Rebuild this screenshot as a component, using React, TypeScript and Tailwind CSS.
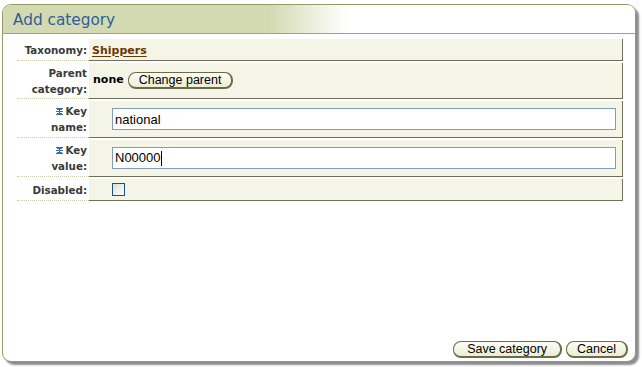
import React from "react";

const Req = () => (
  <svg width="7" height="7" viewBox="0 0 7 7" className="inline-block mr-[3px] align-[0px]">
    <rect x="0" y="0" width="7" height="1" fill="#3b6ea5" />
    <rect x="1" y="1" width="5" height="1" fill="#3b6ea5" />
    <rect x="0" y="3" width="7" height="1" fill="#3b6ea5" />
    <rect x="1" y="5" width="5" height="1" fill="#3b6ea5" />
    <rect x="0" y="6" width="7" height="1" fill="#3b6ea5" />
    <rect x="3" y="1" width="1" height="5" fill="#3b6ea5" />
  </svg>
);

const Btn = ({ children, px = "px-[10px]" }: { children: React.ReactNode; px?: string }) => (
  <button
    type="button"
    className={`h-[17px] ${px} rounded-[8px] border border-[#6b6b48] border-r-2 border-b-2 bg-[linear-gradient(to_bottom,#fdfdf4,#ecedd6)] text-[12.5px] leading-[13px] text-black font-['Liberation_Sans',Arial,sans-serif]`}
  >
    {children}
  </button>
);

const Row = ({
  label,
  h,
  children,
}: {
  label: React.ReactNode;
  h: string;
  children: React.ReactNode;
}) => (
  <div className={`flex ${h}`}>
    <div className="w-[72px] flex items-center justify-end pr-[2px] text-right border-b border-dotted border-[#c9cca6] text-[10.3px] leading-[16px] font-bold text-[#3a3a3a]">
      <div>{label}</div>
    </div>
    <div className="flex-1 flex items-center bg-[#f4f5e6] border-r border-b border-[#707058] pl-[3px]">
      {children}
    </div>
  </div>
);

export default function App() {
  return (
    <div className="w-[642px] h-[367px] bg-white pt-[4px] pl-[2px] font-['DejaVu_Sans',Verdana,sans-serif]">
      <div className="w-[634px] h-[358px] flex flex-col rounded-[9px] border border-[#999966] overflow-hidden bg-white shadow-[3px_3px_2px_rgba(0,0,0,0.45)]">
        <div className="h-[29px] shrink-0 flex items-center pl-[10px] pt-[3px] border-b border-[#a3a46e] bg-[linear-gradient(to_right,#d3d9b0_0px,#d3d9b0_265px,#ffffff_345px)]">
          <span className="text-[15.3px] text-[#2e5f9b] leading-none">Add category</span>
        </div>

        <div className="flex flex-col gap-[2px] pt-[5px] pl-[14px] pr-[12px]">
          <Row label="Taxonomy:" h="h-[22px]">
            <a className="pt-[3px] text-[11px] font-bold text-[#6e3600] underline underline-offset-[2px] decoration-1">
              Shippers
            </a>
          </Row>
          <Row
            label={
              <>
                Parent
                <br />
                category:
              </>
            }
            h="h-[36px]"
          >
            <span className="text-[11px] font-bold text-black mr-[4px] ml-[1px]">none</span>
            <Btn>Change parent</Btn>
          </Row>
          <Row
            label={
              <>
                <Req />
                Key
                <br />
                name:
              </>
            }
            h="h-[37px]"
          >
            <input
              defaultValue="national"
              className="ml-[20px] mr-[6px] flex-1 h-[22px] border border-[#7f9db9] bg-white px-[2px] text-[13px] text-black outline-none font-['Liberation_Sans',Arial,sans-serif]"
            />
          </Row>
          <Row
            label={
              <>
                <Req />
                Key
                <br />
                value:
              </>
            }
            h="h-[37px]"
          >
            <div className="ml-[20px] mr-[6px] flex-1 h-[22px] border border-[#7f9db9] bg-white px-[2px] flex items-center text-[13px] text-black font-['Liberation_Sans',Arial,sans-serif]">
              N00000
              <span className="inline-block w-[1px] h-[15px] bg-black" />
            </div>
          </Row>
          <Row label="Disabled:" h="h-[22px]">
            <span className="ml-[20px] w-[13px] h-[13px] border border-[#1c5180] bg-[linear-gradient(135deg,#dcdcd6,#ffffff)]" />
          </Row>
        </div>

        <div className="flex-1" />
        <div className="flex justify-end gap-[4px] pr-[7px] pb-[3px]">
          <Btn px="px-[13px]">Save category</Btn>
          <Btn>Cancel</Btn>
        </div>
      </div>
    </div>
  );
}
